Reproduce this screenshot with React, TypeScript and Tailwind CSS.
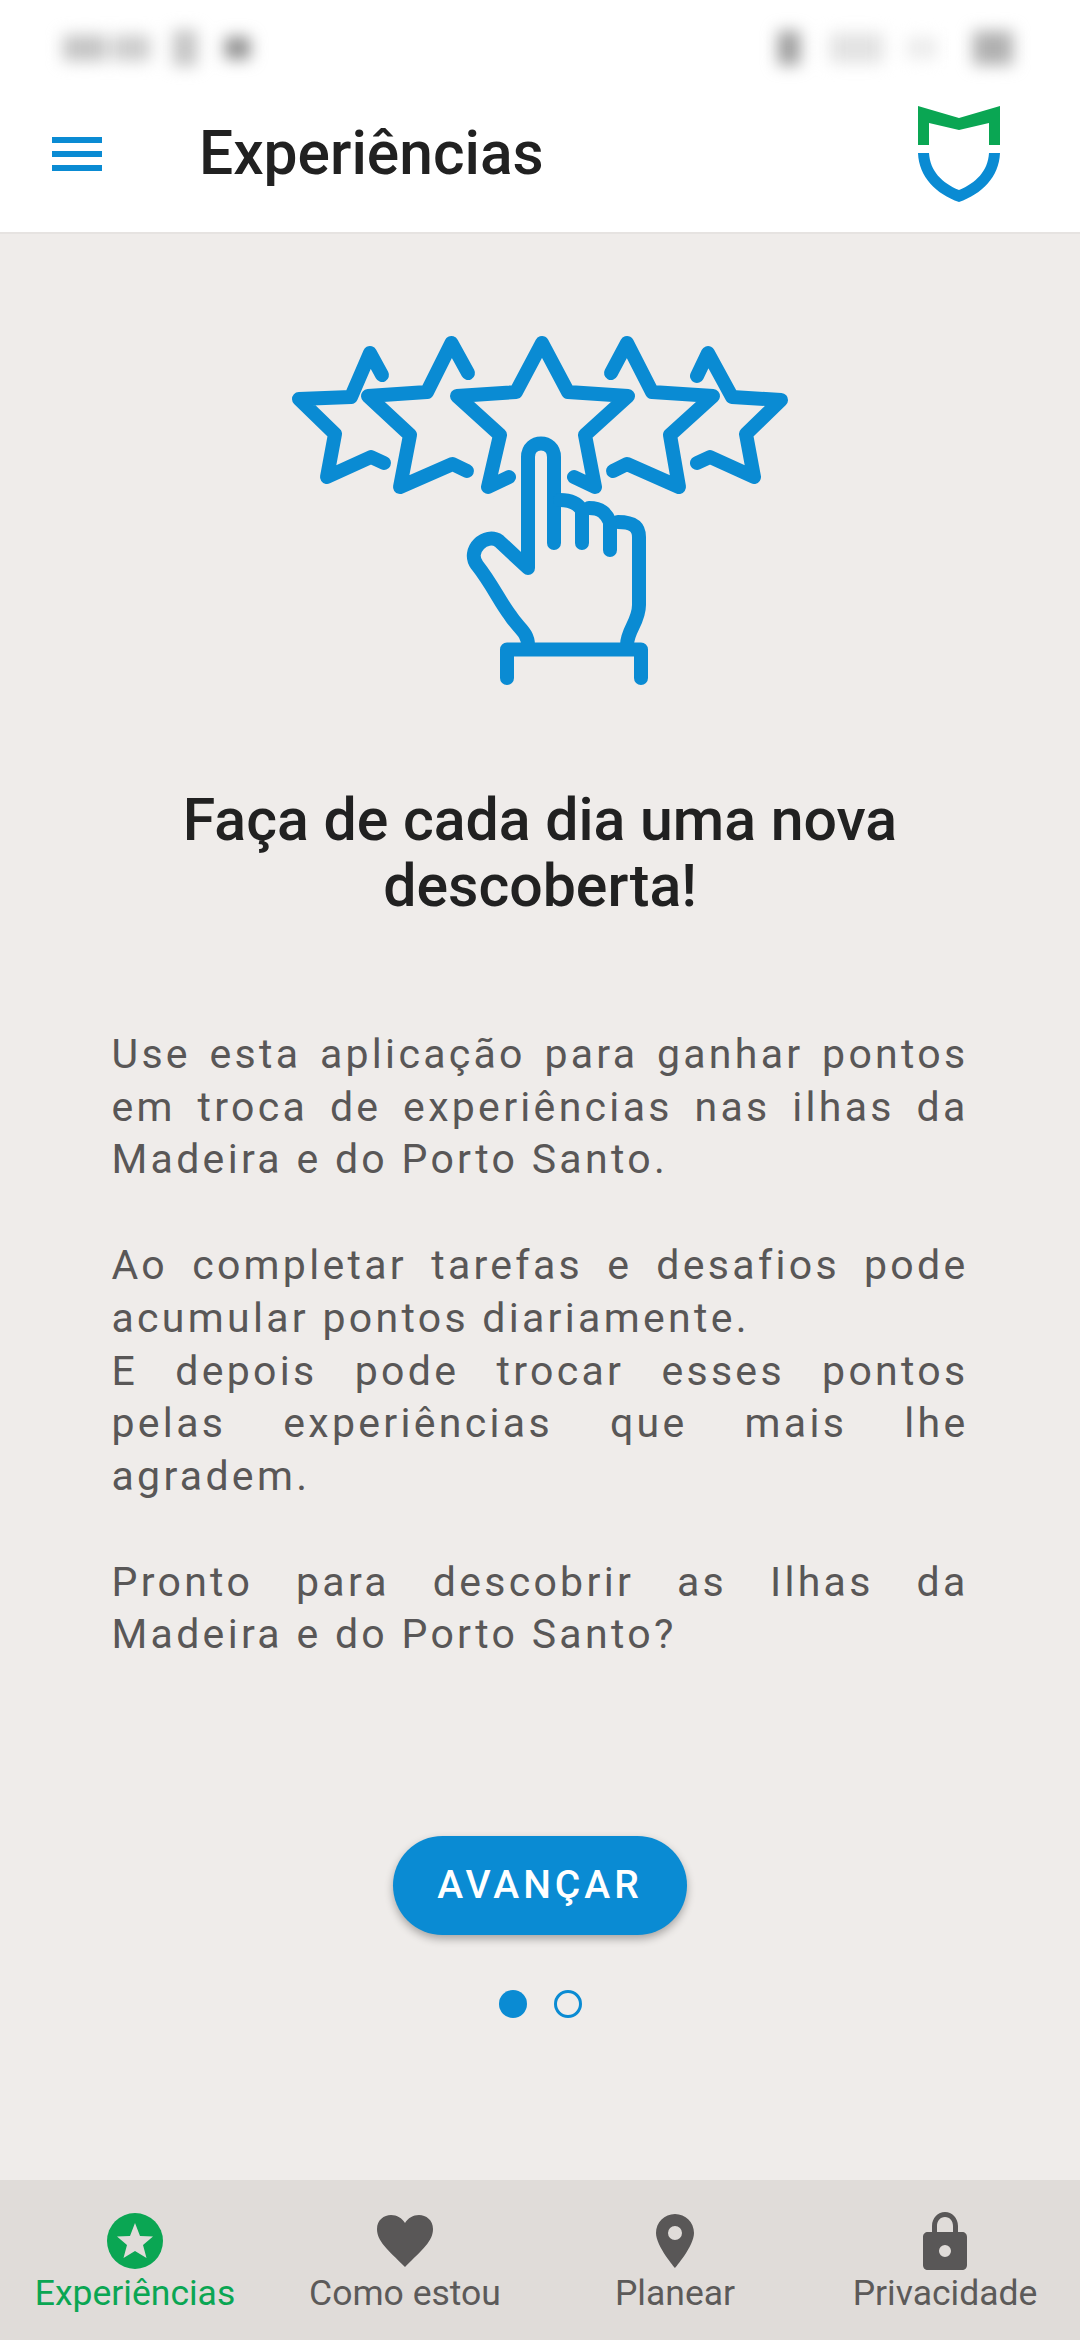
const BLUE = "#0a8bd3";

function MenuIcon() {
  return (
    <div className="flex w-[50px] flex-col gap-[8px]">
      <div className="h-[6px] bg-[#0a8bd3]" />
      <div className="h-[6px] bg-[#0a8bd3]" />
      <div className="h-[6px] bg-[#0a8bd3]" />
    </div>
  );
}

function Logo() {
  return (
    <svg width="82" height="96" viewBox="38 15 82 96" className="block">
      <path d="M38 15 79 27 120 15V54H109V32L79 39 49 32V54H38Z" fill="#0aa653" />
      <path d="M38 62H49C50 80 62 92 79 99 96 92 108 80 109 62H120C119 86 102 103 79 111 56 103 39 86 38 62Z" fill={BLUE} />
    </svg>
  );
}

function StarsHand() {
  return (
    <svg width="540" height="390" viewBox="0 0 540 390" fill="none" stroke={BLUE} strokeWidth="14" strokeLinecap="round" strokeLinejoin="round" className="block">
      <path d="M112 65 100 43 81 87 29 89 65 124 57 167 101 147 114 153" />
      <path d="M198 63 181.500 33 157 82 98 86 140 125 130 177 182.500 154 197 161" />
      <path d="M239 167 218 177 230 125 187 86 246 82 272 33 298 82 358 86 315 125 325 177 304 167" />
      <path d="M341 63 357 33 382 82 443 86 400 125 409 177 357 154 343 161" />
      <path d="M427 66 438 43 462 87 511 90 476 124 484 167 440 147 427 153" />
      <path d="M284 233V147C284 129 258 129 258 147V258L229 231C216 222 196 240 207 255 222 274 230 292 240 305 248 318 258 322 258 335" />
      <path d="M357 335C357 320 369 312 369 295V227C369 216 362 212 348 212" />
      <path d="M290 190C302 190 308 194 312 200V233M319 198C331 198 336 203 340 212V240" />
      <path d="M237 368V339.500H371V368" />
    </svg>
  );
}

function NavItem({ label, active, children }: { label: string; active?: boolean; children: React.ReactNode }) {
  return (
    <div className={"flex flex-col items-center " + (active ? "text-[#0aa653]" : "text-[#5c5a59]")}>
      <div className="flex h-[62px] items-center justify-center">{children}</div>
      <span className="text-[35.500px] leading-[42px]">{label}</span>
    </div>
  );
}

export default function App() {
  return (
    <div className="flex h-[2340px] w-[1080px] flex-col overflow-hidden bg-[#efecea] font-['Roboto',sans-serif]">
      <header className="h-[234px] shrink-0 border-b-2 border-[#e6e3e1] bg-white">
        {/* barra de estado desfocada */}
        <div className="flex h-[90px] items-center justify-between pl-[63px] pr-[67px] pt-[5px] blur-[8px]">
          <div className="flex items-center">
            <div className="h-[26px] w-[44px] bg-[#c4c4c4]" />
            <div className="ml-[6px] h-[26px] w-[37px] bg-[#cccccc]" />
            <div className="ml-[23px] h-[36px] w-[24px] bg-[#c4c4c4]" />
            <div className="ml-[28px] h-[22px] w-[25px] bg-[#8c8c8c]" />
          </div>
          <div className="flex items-center">
            <div className="h-[34px] w-[22px] bg-[#9c9c9c]" />
            <div className="ml-[30px] h-[30px] w-[53px] bg-[#e2e2e2]" />
            <div className="ml-[24px] h-[22px] w-[30px] bg-[#ececec]" />
            <div className="ml-[36px] h-[34px] w-[40px] bg-[#b0b0b0]" />
          </div>
        </div>
        <div className="flex h-[128px] items-center pl-[52px] pr-[80px]">
          <MenuIcon />
          <h1 className="ml-[97px] text-[60.500px] font-medium text-[#212121]">Experiências</h1>
          <div className="ml-auto">
            <Logo />
          </div>
        </div>
      </header>

      <main className="flex flex-1 flex-col items-center">
        <div className="mt-[76px]">
          <StarsHand />
        </div>
        <h2 className="mt-[87px] w-[800px] text-center text-[59px] font-medium leading-[66px] text-[#212121]">
          Faça de cada dia uma nova descoberta!
        </h2>
        <div className="mt-[109px] flex w-[857px] flex-col gap-[53px] text-justify text-[41px] leading-[52.700px] tracking-[3.300px] text-[#595757]">
          <p>Use esta aplicação para ganhar pontos em troca de experiências nas ilhas da Madeira e do Porto Santo.</p>
          <div>
            <p>Ao completar tarefas e desafios pode acumular pontos diariamente.</p>
            <p>E depois pode trocar esses pontos pelas experiências que mais lhe agradem.</p>
          </div>
          <p>Pronto para descobrir as Ilhas da Madeira e do Porto Santo?</p>
        </div>
        <button className="mt-[175px] flex h-[99px] w-[294px] items-center justify-center rounded-full bg-[#0a8bd3] text-[39px] font-medium tracking-[4px] text-white shadow-[0_4px_8px_rgba(0,0,0,0.3)]">
          AVANÇAR
        </button>
        <div className="mt-[55px] flex gap-[27px]">
          <div className="h-[28px] w-[28px] rounded-full bg-[#0a8bd3]" />
          <div className="h-[28px] w-[28px] rounded-full border-[3px] border-[#0a8bd3]" />
        </div>
      </main>

      <nav className="grid h-[160px] shrink-0 grid-cols-4 bg-[#e0dcd9] pt-[30px]">
        <NavItem label="Experiências" active>
          <svg width="56" height="56" viewBox="0 0 56 56">
            <circle cx="28" cy="28" r="28" fill="#0aa653" />
            <path d="M28 10 33 23 46 23.500 36 32 39.500 45 28 38 16.500 45 20 32 10 23.500 23 23Z" fill="#e0dcd9" />
          </svg>
        </NavItem>
        <NavItem label="Como estou">
          <svg width="56" height="52" viewBox="0 0 56 52">
            <path d="M28 52C10 34 0 26 0 14 0 5 7 0 14 0 20 0 25 3 28 8 31 3 36 0 42 0 49 0 56 5 56 14 56 26 46 34 28 52Z" fill="#595757" />
          </svg>
        </NavItem>
        <NavItem label="Planear">
          <svg width="38" height="54" viewBox="0 0 38 54">
            <path fillRule="evenodd" d="M19 0C8.500 0 0 8.500 0 19 0 32 19 54 19 54S38 32 38 19C38 8.500 29.500 0 19 0ZM19 26A7 7 0 1 1 19 12 7 7 0 0 1 19 26Z" fill="#595757" />
          </svg>
        </NavItem>
        <NavItem label="Privacidade">
          <svg width="44" height="58" viewBox="0 0 44 58">
            <path fillRule="evenodd" d="M9 20V14C9 6 15 0 22 0S35 6 35 14V20H39C42 20 44 22 44 25V53C44 56 42 58 39 58H5C2 58 0 56 0 53V25C0 22 2 20 5 20ZM14 20H30V14C30 9 27 5 22 5S14 9 14 14ZM22 45A6 6 0 1 0 22 33 6 6 0 0 0 22 45Z" fill="#595757" />
          </svg>
        </NavItem>
      </nav>
    </div>
  );
}
